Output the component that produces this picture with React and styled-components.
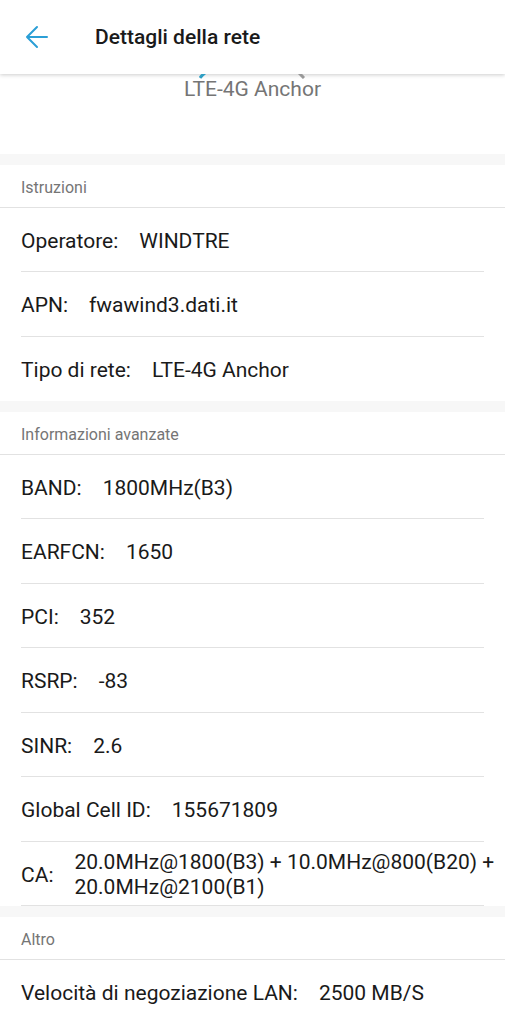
import styled, { createGlobalStyle } from 'styled-components';

const GlobalStyle = createGlobalStyle`
  * {
    box-sizing: border-box;
  }

  body {
    margin: 0;
    background-color: #fff;
    color: #1a1a1a;
    font-family: Roboto, 'Liberation Sans', sans-serif;
    overflow-x: hidden;
  }
`;

const Header = styled.header`
  display: flex;
  align-items: center;
  gap: 42px;
  height: 74px;
  padding: 0 21px;
  background-color: #fff;
  box-shadow: 0 1px 4px rgba(0, 0, 0, 0.2);
`;

const BackButton = styled.button`
  display: flex;
  padding: 0;
  border: 0;
  background: none;
  cursor: pointer;
`;

const Title = styled.h1`
  margin: 0;
  font-size: 21px;
  font-weight: 500;
  line-height: 24px;
`;

const Signal = styled.div`
  display: flex;
  flex-direction: column;
  align-items: center;
  height: 80px;
  color: #757575;
  font-size: 21px;
  line-height: 20px;
`;

// visible bottom ends of the signal gauge
const Gauge = styled.svg`
  display: block;
  flex: none;
`;

const Section = styled.section`
  border-top: 11px solid #f7f7f7;
`;

const SectionTitle = styled.h2`
  margin: 0;
  padding: 13px 21px 9px;
  border-bottom: 1px solid #e2e2e2;
  color: #757575;
  font-size: 16px;
  font-weight: 400;
  line-height: 20px;
`;

const List = styled.dl`
  margin: 0;
`;

const Row = styled.div`
  display: flex;
  align-items: center;
  gap: 21px;
  min-height: 64px;
  margin: 0 21px;
  padding-top: 3px;
  border-bottom: ${(props) => (props.$line ? '1px solid #e2e2e2' : '0')};
  font-size: 21px;
  line-height: 25px;

  &:nth-child(even) {
    min-height: 65px;
  }
`;

const Label = styled.dt`
  flex: none;
`;

// long values may run into the right margin
const Value = styled.dd`
  margin: 0 -16px 0 0;
`;

const sections = [
  {
    title: 'Istruzioni',
    rows: [
      ['Operatore', 'WINDTRE'],
      ['APN', 'fwawind3.dati.it'],
      ['Tipo di rete', 'LTE-4G Anchor'],
    ],
  },
  {
    title: 'Informazioni avanzate',
    lastLine: true,
    rows: [
      ['BAND', '1800MHz(B3)'],
      ['EARFCN', '1650'],
      ['PCI', '352'],
      ['RSRP', '-83'],
      ['SINR', '2.6'],
      ['Global Cell ID', '155671809'],
      ['CA', '20.0MHz@1800(B3) + 10.0MHz@800(B20) + 20.0MHz@2100(B1)'],
    ],
  },
  {
    title: 'Altro',
    rows: [['Velocità di negoziazione LAN', '2500 MB/S']],
  },
];

export default function App() {
  return (
    <>
      <GlobalStyle />
      <Header>
        <BackButton aria-label="Indietro">
          <svg width="32" height="32" viewBox="0 0 32 32" fill="none" stroke="#2b9fd6" strokeWidth="2" strokeLinecap="round" strokeLinejoin="round">
            <path d="M26 16H6M16 6L6 16l10 10" />
          </svg>
        </BackButton>
        <Title>Dettagli della rete</Title>
      </Header>
      <main>
        <Signal>
          <Gauge width="108" height="5" viewBox="0 0 108 5" strokeWidth="3" fill="none">
            <path d="M1 4Q3 1 6 -1" stroke="#2f9fc4" />
            <path d="M100 -1Q102 1 105 4" stroke="#999" />
          </Gauge>
          LTE-4G Anchor
        </Signal>
        {sections.map((section) => (
          <Section key={section.title}>
            <SectionTitle>{section.title}</SectionTitle>
            <List>
              {section.rows.map(([label, value], i) => (
                <Row key={label} $line={section.lastLine || i < section.rows.length - 1}>
                  <Label>{label}:</Label>
                  <Value>{value}</Value>
                </Row>
              ))}
            </List>
          </Section>
        ))}
      </main>
    </>
  );
}
